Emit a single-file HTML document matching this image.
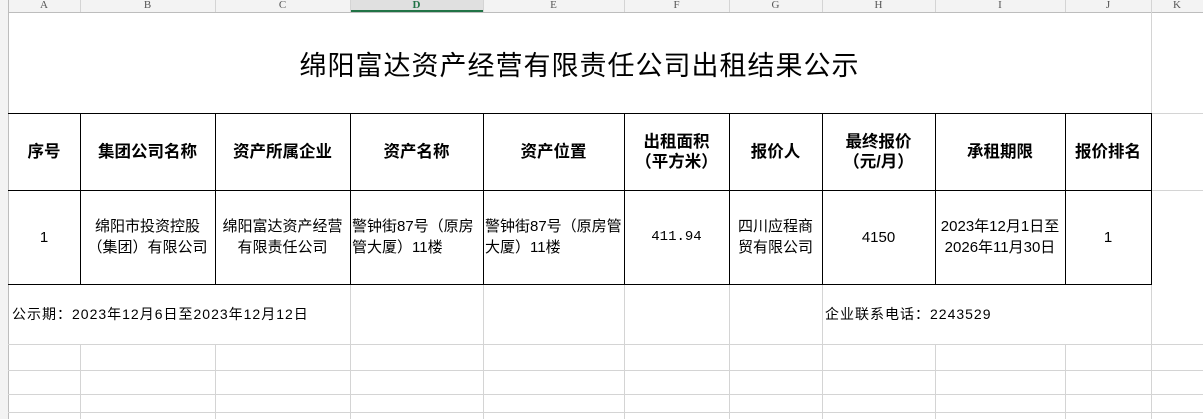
<!DOCTYPE html>
<html><head><meta charset="utf-8"><style>
*{margin:0;padding:0;box-sizing:border-box}
body{width:1203px;height:419px;background:#fff;position:relative;overflow:hidden;font-family:"Liberation Sans","Noto Sans CJK SC",sans-serif;color:#000}
.a{position:absolute}
.vl{position:absolute;width:1px;background:#d4d4d4}
.hl{position:absolute;height:1px;background:#d4d4d4}
.bv{position:absolute;width:1px;background:#000}
.bh{position:absolute;height:1px;background:#000}
.ch{position:absolute;top:0;height:12px;font:11px "Liberation Serif",serif;color:#555;text-align:center;line-height:11px}
.c{position:absolute;display:flex;align-items:center;justify-content:center;text-align:center}
.h{font-weight:bold;font-size:16.5px;line-height:20px}
.d{font-size:15px;line-height:21px}
</style></head><body>
<div class="a" style="left:0;top:0;width:1203px;height:12px;background:#f3f3f3"></div>
<div class="a" style="left:350px;top:0;width:133px;height:12px;background:#e0e0e0"></div>
<div class="a" style="left:350px;top:10px;width:133px;height:2px;background:#217346"></div>
<div class="hl" style="left:0;top:12px;width:1203px;background:#bdbdbd"></div>
<div class="ch" style="left:8px;width:72px">A</div>
<div class="ch" style="left:80px;width:135px">B</div>
<div class="ch" style="left:215px;width:135px">C</div>
<div class="ch" style="left:350px;width:133px;color:#217346;font-weight:bold">D</div>
<div class="ch" style="left:483px;width:141px">E</div>
<div class="ch" style="left:624px;width:105px">F</div>
<div class="ch" style="left:729px;width:93px">G</div>
<div class="ch" style="left:822px;width:113px">H</div>
<div class="ch" style="left:935px;width:130px">I</div>
<div class="ch" style="left:1065px;width:86px">J</div>
<div class="ch" style="left:1151px;width:52px">K</div>
<div class="vl" style="left:80px;top:0;height:12px"></div><div class="vl" style="left:215px;top:0;height:12px"></div><div class="vl" style="left:350px;top:0;height:12px"></div><div class="vl" style="left:483px;top:0;height:12px"></div><div class="vl" style="left:624px;top:0;height:12px"></div><div class="vl" style="left:729px;top:0;height:12px"></div><div class="vl" style="left:822px;top:0;height:12px"></div><div class="vl" style="left:935px;top:0;height:12px"></div><div class="vl" style="left:1065px;top:0;height:12px"></div><div class="vl" style="left:1151px;top:0;height:12px"></div>
<div class="a" style="left:0;top:12px;width:8px;height:407px;background:#f3f3f3"></div>
<div class="vl" style="left:8px;top:0;height:419px;background:#bdbdbd"></div>
<div class="vl" style="left:1151px;top:12px;height:407px"></div>
<div class="hl" style="left:1151px;top:113px;width:52px"></div>
<div class="hl" style="left:1151px;top:190px;width:52px"></div>
<div class="hl" style="left:8px;top:344px;width:1195px"></div>
<div class="hl" style="left:8px;top:370px;width:1195px"></div>
<div class="hl" style="left:8px;top:394px;width:1195px"></div>
<div class="hl" style="left:8px;top:412px;width:1195px"></div>
<div class="vl" style="left:80px;top:344px;height:75px"></div>
<div class="vl" style="left:215px;top:344px;height:75px"></div>
<div class="vl" style="left:350px;top:284px;height:135px"></div>
<div class="vl" style="left:483px;top:284px;height:135px"></div>
<div class="vl" style="left:624px;top:284px;height:135px"></div>
<div class="vl" style="left:729px;top:284px;height:135px"></div>
<div class="vl" style="left:822px;top:284px;height:135px"></div>
<div class="vl" style="left:935px;top:344px;height:75px"></div>
<div class="vl" style="left:1065px;top:344px;height:75px"></div>
<div class="c" style="left:8px;top:12px;width:1143px;height:101px;font-size:27px;letter-spacing:1px;padding-top:2px">绵阳富达资产经营有限责任公司出租结果公示</div>
<div class="bh" style="left:8px;top:113px;width:1144px"></div>
<div class="bh" style="left:8px;top:190px;width:1144px"></div>
<div class="bh" style="left:8px;top:284px;width:1144px"></div>
<div class="bv" style="left:80px;top:113px;height:171px"></div>
<div class="bv" style="left:215px;top:113px;height:171px"></div>
<div class="bv" style="left:350px;top:113px;height:171px"></div>
<div class="bv" style="left:483px;top:113px;height:171px"></div>
<div class="bv" style="left:624px;top:113px;height:171px"></div>
<div class="bv" style="left:729px;top:113px;height:171px"></div>
<div class="bv" style="left:822px;top:113px;height:171px"></div>
<div class="bv" style="left:935px;top:113px;height:171px"></div>
<div class="bv" style="left:1065px;top:113px;height:171px"></div>
<div class="bv" style="left:1151px;top:113px;height:171px"></div>
<div class="c h" style="left:8px;top:113px;width:72px;height:77px">序号</div>
<div class="c h" style="left:80px;top:113px;width:135px;height:77px">集团公司名称</div>
<div class="c h" style="left:215px;top:113px;width:135px;height:77px">资产所属企业</div>
<div class="c h" style="left:350px;top:113px;width:133px;height:77px">资产名称</div>
<div class="c h" style="left:483px;top:113px;width:141px;height:77px">资产位置</div>
<div class="c h" style="left:624px;top:113px;width:105px;height:77px">出租面积<br>（平方米）</div>
<div class="c h" style="left:729px;top:113px;width:93px;height:77px">报价人</div>
<div class="c h" style="left:822px;top:113px;width:113px;height:77px">最终报价<br>（元/月）</div>
<div class="c h" style="left:935px;top:113px;width:130px;height:77px">承租期限</div>
<div class="c h" style="left:1065px;top:113px;width:86px;height:77px">报价排名</div>
<div class="c d" style="left:8px;top:190px;width:72px;height:94px">1</div>
<div class="c d" style="left:80px;top:190px;width:135px;height:94px">绵阳市投资控股<br>（集团）有限公司</div>
<div class="c d" style="left:215px;top:190px;width:135px;height:94px">绵阳富达资产经营<br>有限责任公司</div>
<div class="c d" style="left:352px;top:190px;width:131px;height:94px;justify-content:flex-start;text-align:left;white-space:nowrap">警钟街87号（原房<br>管大厦）11楼</div>
<div class="c d" style="left:485px;top:190px;width:139px;height:94px;justify-content:flex-start;text-align:left;white-space:nowrap;overflow:hidden">警钟街87号（原房管<br>大厦）11楼</div>
<div class="c d" style="left:624px;top:190px;width:105px;height:94px;font-family:'Liberation Mono',monospace;font-size:14px">411.94</div>
<div class="c d" style="left:729px;top:190px;width:93px;height:94px">四川应程商<br>贸有限公司</div>
<div class="c d" style="left:822px;top:190px;width:113px;height:94px">4150</div>
<div class="c d" style="left:935px;top:190px;width:130px;height:94px">2023年12月1日至<br>2026年11月30日</div>
<div class="c d" style="left:1065px;top:190px;width:86px;height:94px">1</div>
<div class="a" style="left:12px;top:305px;font-size:14px;letter-spacing:1px;line-height:18px;white-space:nowrap">公示期：2023年12月6日至2023年12月12日</div>
<div class="a" style="left:825px;top:305px;font-size:14px;letter-spacing:1px;line-height:18px;white-space:nowrap">企业联系电话：2243529</div>
</body></html>
